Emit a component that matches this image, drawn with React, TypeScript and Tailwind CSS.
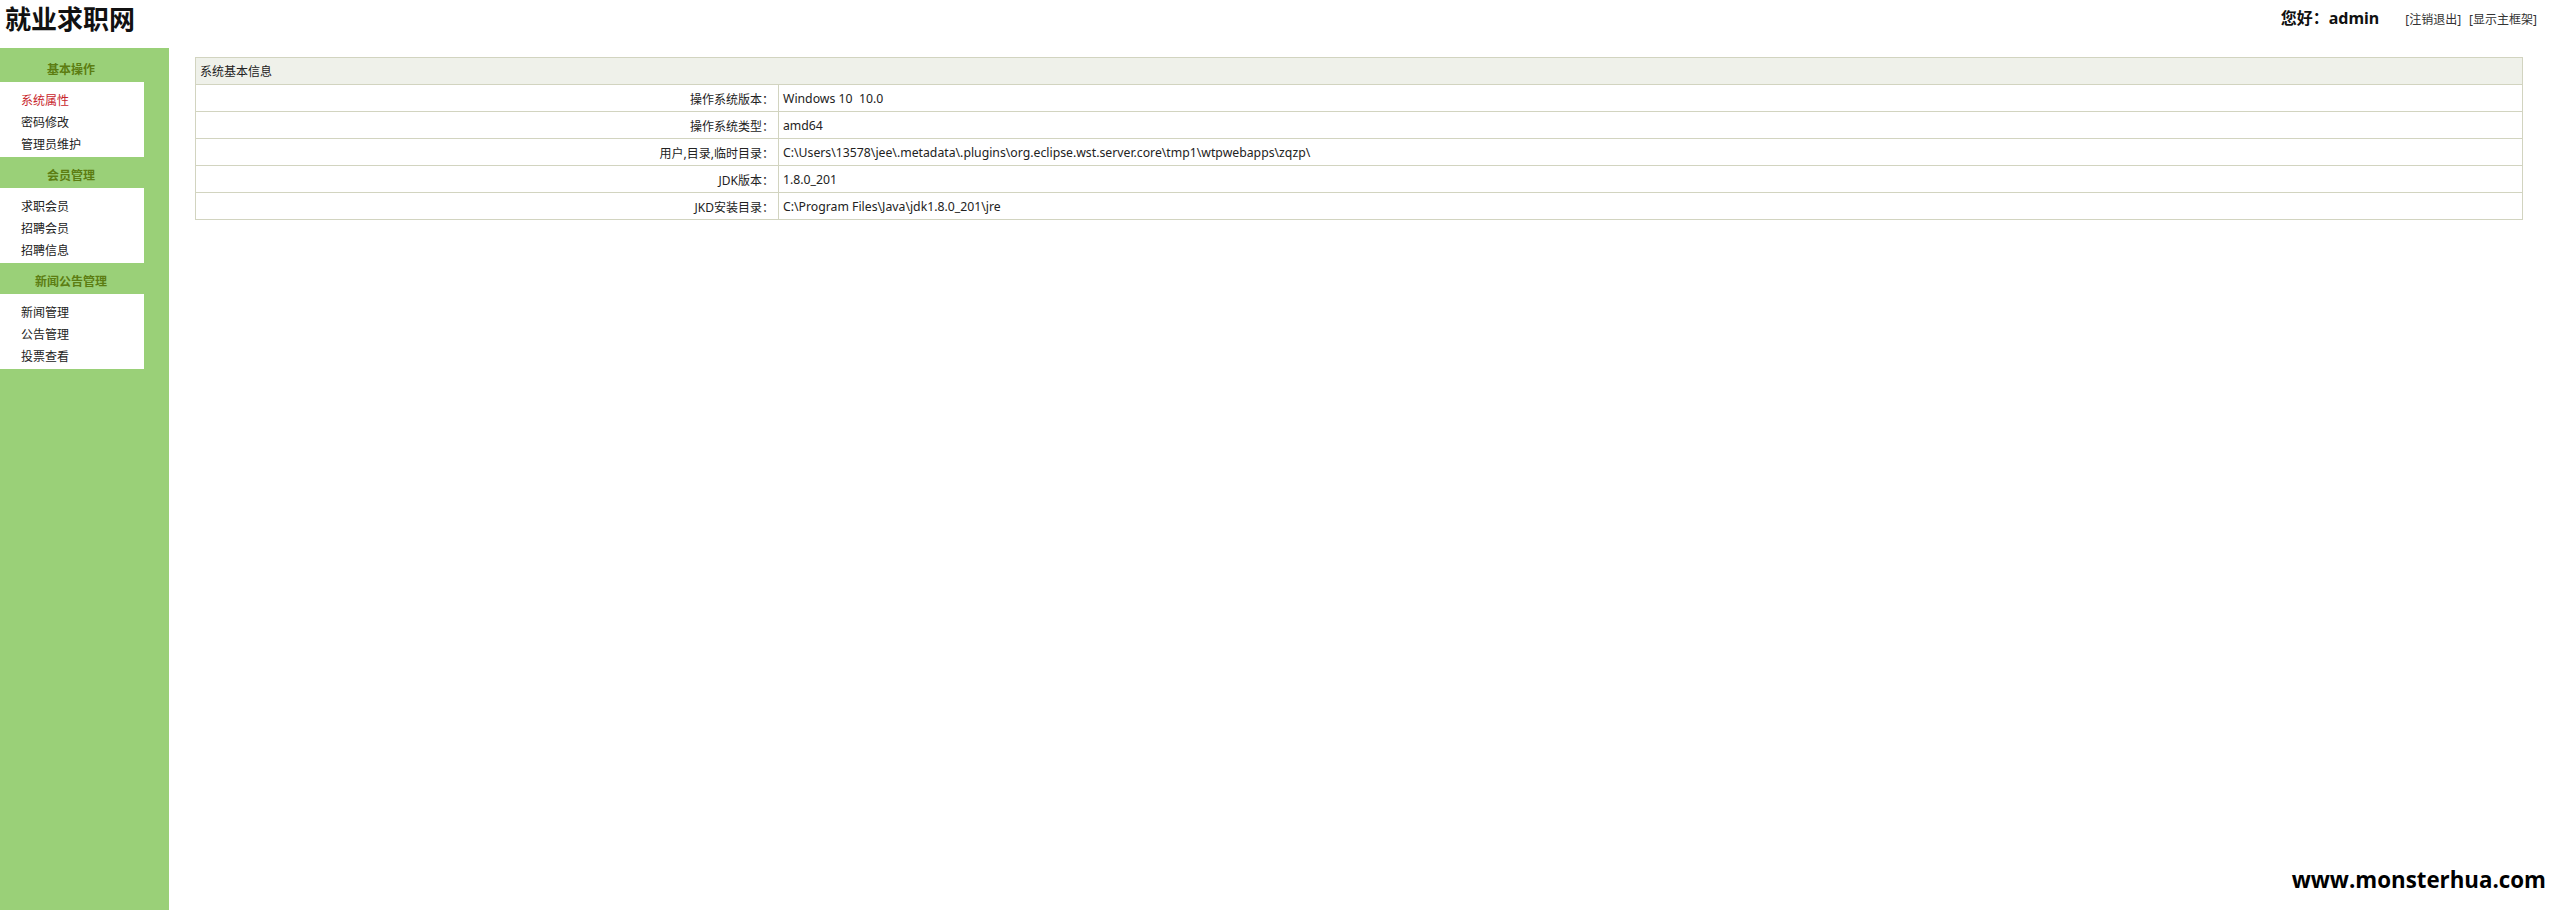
const menus = [
  { title: "基本操作", items: ["系统属性", "密码修改", "管理员维护"] },
  { title: "会员管理", items: ["求职会员", "招聘会员", "招聘信息"] },
  { title: "新闻公告管理", items: ["新闻管理", "公告管理", "投票查看"] },
];

const rows = [
  ["操作系统版本：", "Windows 10\u00a0\u00a010.0"],
  ["操作系统类型：", "amd64"],
  ["用户,目录,临时目录：", "C:\\Users\\13578\\jee\\.metadata\\.plugins\\org.eclipse.wst.server.core\\tmp1\\wtpwebapps\\zqzp\\"],
  ["JDK版本：", "1.8.0_201"],
  ["JKD安装目录：", "C:\\Program Files\\Java\\jdk1.8.0_201\\jre"],
];

export default function App() {
  return (
    <div className="relative h-[910px] overflow-hidden bg-white text-[12px] text-[#222] font-['Noto_Sans','Noto_Sans_CJK_SC',sans-serif]">
      {/* Header */}
      <header className="flex h-12 items-start justify-between">
        <h1 className="pl-[5px] pt-px text-[26px] leading-[36px] font-bold text-[#111]">就业求职网</h1>
        <div className="flex items-center pr-[12px] pt-[6px]">
          <span className="text-[16px] leading-[24px] font-bold text-[#111]">您好：admin</span>
          <a href="#" className="ml-[26px] mr-[8px] pt-[3px] text-[#333]">[注销退出]</a>
          <a href="#" className="pt-[3px] text-[#333]">[显示主框架]</a>
        </div>
      </header>

      <div className="flex h-[862px]">
        {/* Sidebar */}
        <aside className="w-[169px] shrink-0 bg-[#9ad078]">
          {menus.map((menu, i) => (
            <div key={menu.title}>
              <div className={`pr-[27px] text-center font-bold text-[#5c7d12] ${i === 0 ? "h-[34px] leading-[44px]" : "h-[31px] leading-[38px]"}`}>
                {menu.title}
              </div>
              <ul className="w-[144px] bg-white pb-px pl-[21px] pt-2">
                {menu.items.map((item) => (
                  <li key={item} className={`h-[22px] leading-[22px] ${item === "系统属性" ? "text-[#c8252c]" : "text-[#222]"}`}>
                    {item}
                  </li>
                ))}
              </ul>
            </div>
          ))}
        </aside>

        {/* Main */}
        <main className="min-w-0 flex-1 pl-[26px] pr-[26px] pt-[9px]">
          <table className="w-full table-fixed border-collapse border border-[#d2d4c0]">
            <colgroup>
              <col className="w-[583px]" />
              <col />
            </colgroup>
            <thead>
              <tr className="h-[27px] bg-[#eff1ea]">
                <th colSpan={2} className="border border-[#d2d4c0] pl-1 pt-[2px] text-left font-normal">系统基本信息</th>
              </tr>
            </thead>
            <tbody>
              {rows.map(([label, value]) => (
                <tr key={label} className="h-[27px]">
                  <td className="border border-[#d2d4c0] pr-1 pt-[3px] text-right">{label}</td>
                  <td className="border border-[#d2d4c0] pl-1 pt-[3px] text-[12.25px]">{value}</td>
                </tr>
              ))}
            </tbody>
          </table>
        </main>
      </div>

      <div className="absolute bottom-[15px] right-[3px] text-[22.3px] leading-[30px] font-bold text-black font-['Open_Sans',sans-serif]">
        www.monsterhua.com
      </div>
    </div>
  );
}
